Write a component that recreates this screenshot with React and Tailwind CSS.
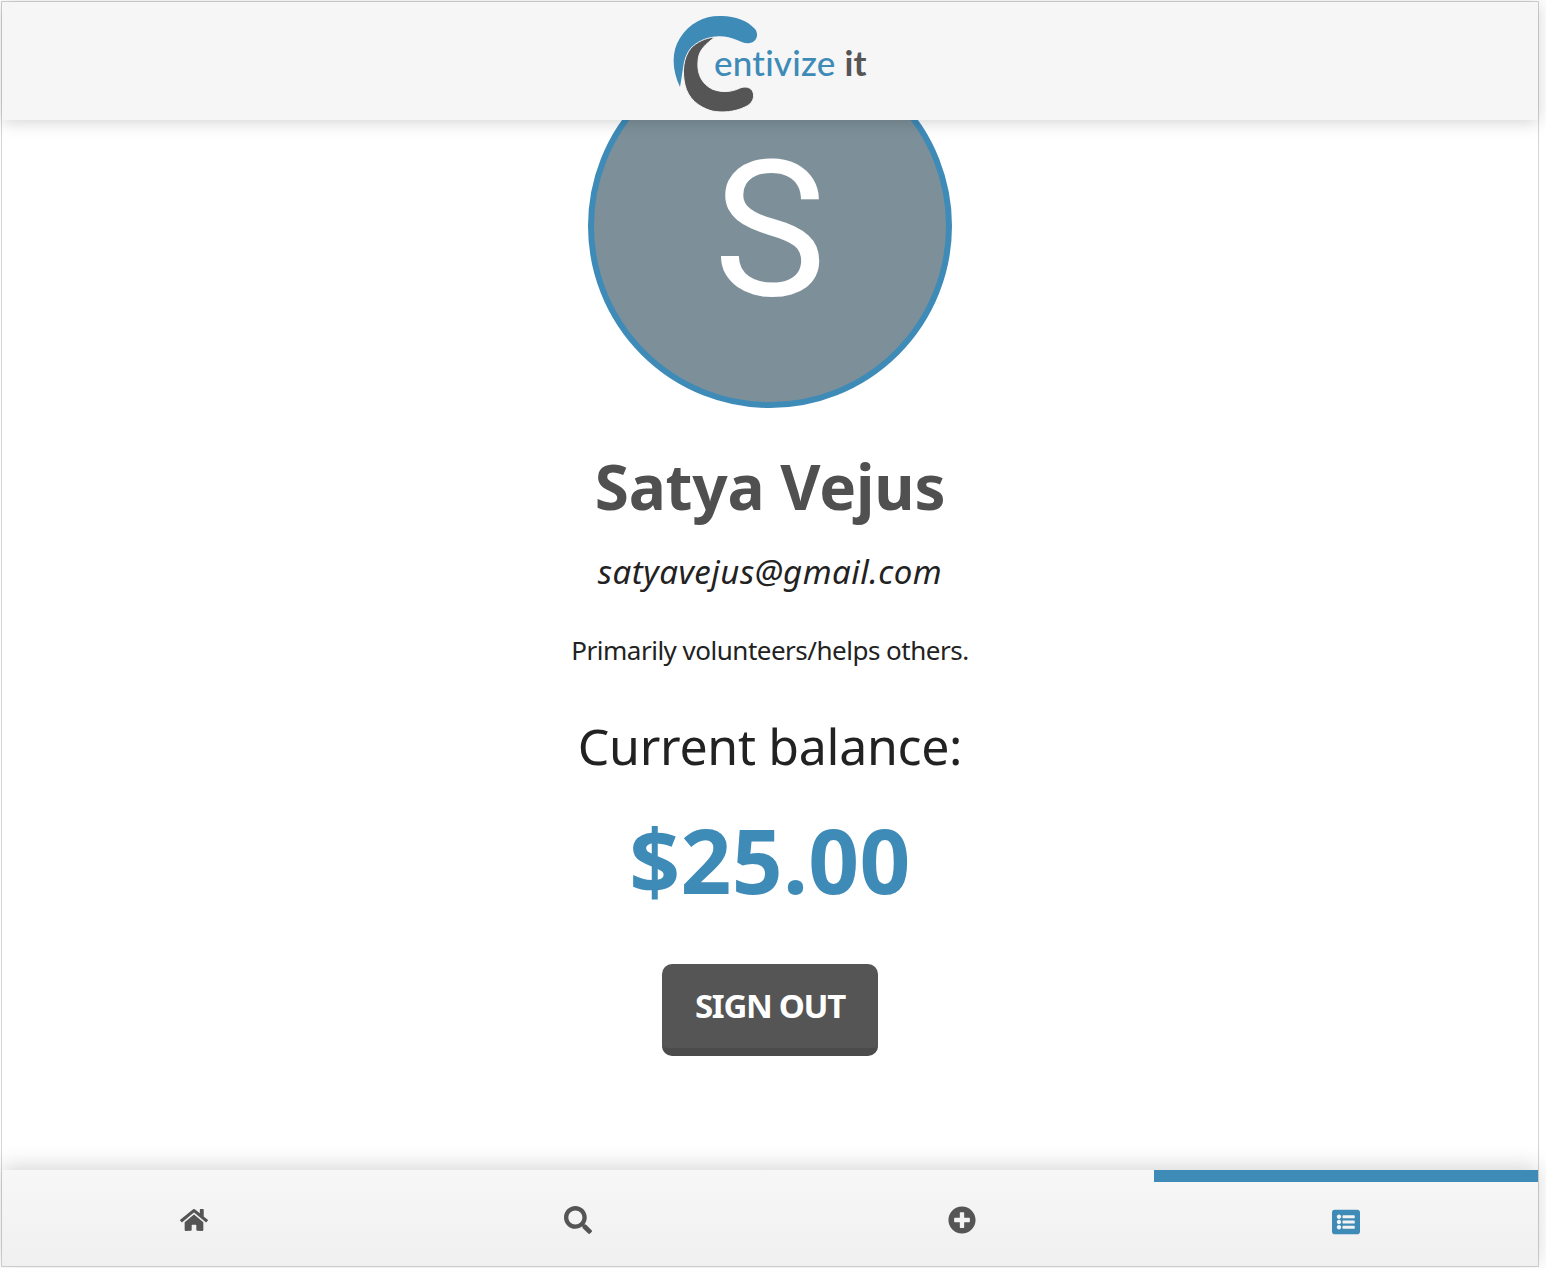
import React from "react";
import { FaHome, FaSearch, FaPlusCircle, FaListAlt } from "react-icons/fa";

function Logo() {
  return (
    <div className="relative w-[196px] h-[100px]">
      <svg width="196" height="100" viewBox="672 12 196 100" className="absolute left-0 top-0">
        <path d="M680 87C672 70 671 52 680 38C690 22 706 15 722 16C735 16 748 21 755 29C759 34 757 42 750 43C745 44 742 42 737 40C728 36 718 35 710 38C697 42 686 55 683 68C682 75 681 81 680 87Z" fill="#3e8bb8" />
        <path d="M715 37C706 44 698 50 698 62C697 74 702 84 712 89C722 93 732 92 740 88C745 86 751 87 753 92C755 98 752 104 745 107C735 112 722 113 712 111C698 107 688 98 685 85C682 72 683 58 691 48C697 42 705 38 715 37Z" fill="#555555" stroke="#f6f6f6" strokeWidth="1" />
      </svg>
      <span className="absolute left-[42px] top-[28px] text-[35px] leading-[44px] tracking-[0.2px] font-medium font-['Lato',sans-serif] text-[#3e8bb8] whitespace-nowrap">
        entivize <span className="text-[#555555] font-bold">it</span>
      </span>
    </div>
  );
}

function Tab({ children, active }) {
  return (
    <div className="relative flex-1 flex items-start justify-center pt-[38px]">
      {active && <div className="absolute top-0 left-0 right-0 h-[12px] bg-[#3e8bb8]" />}
      {children}
    </div>
  );
}

export default function App() {
  return (
    <div className="w-[1546px] h-[1268px] bg-white pr-[7px] pb-px pt-px pl-px font-['Noto_Sans',sans-serif] overflow-hidden">
      <div className="h-full border border-[#d4d4d4] border-b-0 flex flex-col bg-white">
        <header className="relative z-10 h-[118px] shrink-0 bg-[#f6f6f6] shadow-[0_2px_16px_rgba(0,0,0,0.18)] flex justify-center pt-[10px]">
          <Logo />
        </header>
        <main className="flex-1 flex flex-col items-center min-h-0">
          <div className="mt-[-76px] w-[364px] h-[364px] shrink-0 rounded-full border-[6px] border-[#3e8bb8] bg-[#7d9099] flex items-center justify-center">
            <span className="text-white text-[190px] leading-none font-normal font-['Roboto',sans-serif] mt-[8px]">S</span>
          </div>
          <h1 className="mt-[40px] text-[62px] leading-[76px] font-bold text-[#505050] tracking-[-0.2px]">Satya Vejus</h1>
          <p className="mt-[26px] text-[33px] leading-[44px] italic text-[#222222] tracking-[0.5px]">satyavejus@gmail.com</p>
          <p className="mt-[38px] text-[26px] leading-[36px] text-[#222222] tracking-[-0.5px]">Primarily volunteers/helps others.</p>
          <p className="mt-[44px] text-[50px] leading-[68px] text-[#222222] tracking-[-0.3px]">Current balance:</p>
          <p className="mt-[30px] text-[89px] leading-[100px] font-bold text-[#3e8bb8] tracking-[0.3px]">$25.00</p>
          <button className="mt-[54px] w-[216px] h-[92px] rounded-[10px] bg-[#555555] border-b-[8px] border-[#4b4b4b] text-white text-[33px] font-bold tracking-[-1.3px] leading-none pb-[2px]">SIGN OUT</button>
        </main>
        <footer className="relative h-[97px] shrink-0 flex bg-gradient-to-b from-[#f7f7f7] to-[#f0f0f0] border-b border-[#cccccc] shadow-[0_-4px_20px_rgba(0,0,0,0.16)]">
          <Tab><FaHome size={28} color="#555555" className="mt-[-2px]" /></Tab>
          <Tab><FaSearch size={28} color="#555555" className="mt-[-2px]" /></Tab>
          <Tab><FaPlusCircle size={28} color="#555555" className="mt-[-2px]" /></Tab>
          <Tab active><FaListAlt size={28} color="#3e8bb8" /></Tab>
        </footer>
      </div>
    </div>
  );
}
